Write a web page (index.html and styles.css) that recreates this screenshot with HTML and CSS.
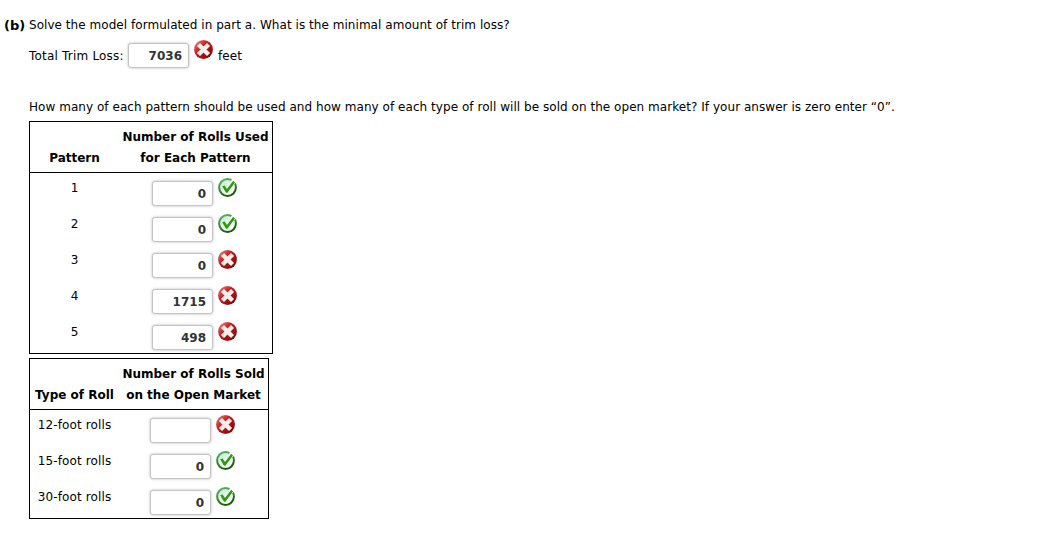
FILE: index.html
```html
<!DOCTYPE html>
<html>
<head>
<meta charset="utf-8">
<title>Trim Loss</title>
<link rel="stylesheet" href="styles.css">
</head>
<body>
	<svg class="defs" width="0" height="0">
		<defs>
			<linearGradient id="redFill" x1="0" y1="0" x2="1" y2="1">
				<stop offset="0" stop-color="#f08a8a"/>
				<stop offset="0.4" stop-color="#c81c24"/>
				<stop offset="1" stop-color="#700000"/>
			</linearGradient>
			<linearGradient id="greenRing" x1="0" y1="0" x2="0.5" y2="1">
				<stop offset="0" stop-color="#5cba68"/>
				<stop offset="1" stop-color="#145c08"/>
			</linearGradient>
			<linearGradient id="greenFill" x1="0" y1="0" x2="1" y2="1">
				<stop offset="0" stop-color="#b4e6c0"/>
				<stop offset="0.7" stop-color="#ffffff"/>
			</linearGradient>
			<symbol id="wrong" viewBox="0 0 19 19">
				<circle cx="9.5" cy="9.5" r="9.4" fill="url(#redFill)"/>
				<path d="M6 6L13 13M13 6L6 13" stroke="#f3efe9" stroke-width="4.4" stroke-linecap="square"/>
			</symbol>
			<symbol id="right" viewBox="0 0 19 19">
				<circle cx="9.5" cy="9.5" r="8.4" fill="url(#greenFill)" stroke="url(#greenRing)" stroke-width="2"/>
				<path d="M12.6 3.6L14.6 0L18.6 4.2L15.4 7Z" fill="#fff"/>
				<path d="M4.2 8.2L6.6 7.4L9 11L15.2 2.8L17 4.6L9.4 14.8L8 14.8Z" fill="#329a0a"/>
			</symbol>
		</defs>
	</svg>

	<div class="question"><b class="part">(b)</b><span>Solve the model formulated in part a. What is the minimal amount of trim loss?</span></div>
	<div class="loss">
		<span class="losslabel">Total Trim Loss:</span>
		<div class="answer"><input type="text" value="7036"><svg class="mark"><use href="#wrong"/></svg></div>
		<span class="unit">feet</span>
	</div>

	<p class="howmany">How many of each pattern should be used and how many of each type of roll will be sold on the open market? If your answer is zero enter “0”.</p>

	<table class="rolls used">
		<tr>
			<th class="name"><span>Pattern</span></th>
			<th><span>Number of Rolls Used</span><br><span>for Each Pattern</span></th>
		</tr>
		<tr>
			<td class="name">1</td>
			<td><div class="answer"><input type="text" value="0"><svg class="mark"><use href="#right"/></svg></div></td>
		</tr>
		<tr>
			<td class="name">2</td>
			<td><div class="answer"><input type="text" value="0"><svg class="mark"><use href="#right"/></svg></div></td>
		</tr>
		<tr>
			<td class="name">3</td>
			<td><div class="answer"><input type="text" value="0"><svg class="mark"><use href="#wrong"/></svg></div></td>
		</tr>
		<tr>
			<td class="name">4</td>
			<td><div class="answer"><input type="text" value="1715"><svg class="mark"><use href="#wrong"/></svg></div></td>
		</tr>
		<tr>
			<td class="name">5</td>
			<td><div class="answer"><input type="text" value="498"><svg class="mark"><use href="#wrong"/></svg></div></td>
		</tr>
	</table>

	<table class="rolls sold">
		<tr>
			<th class="name"><span>Type of Roll</span></th>
			<th><span>Number of Rolls Sold</span><br><span>on the Open Market</span></th>
		</tr>
		<tr>
			<td class="name">12-foot rolls</td>
			<td><div class="answer"><input type="text" value=""><svg class="mark"><use href="#wrong"/></svg></div></td>
		</tr>
		<tr>
			<td class="name">15-foot rolls</td>
			<td><div class="answer"><input type="text" value="0"><svg class="mark"><use href="#right"/></svg></div></td>
		</tr>
		<tr>
			<td class="name">30-foot rolls</td>
			<td><div class="answer"><input type="text" value="0"><svg class="mark"><use href="#right"/></svg></div></td>
		</tr>
	</table>
</body>
</html>
```

FILE: styles.css
```css
body {
	margin: 0;
	padding: 15px 0 0 29px;
	background: #fff;
	color: #000;
	font-family: Verdana, "DejaVu Sans", sans-serif;
	font-size: 12px;
	line-height: 21px;
	letter-spacing: 0.045px;
}
.defs {
	display: block;
}
.question {
	display: flex;
	margin-left: -25px;
	white-space: nowrap;
}
.part {
	width: 25px;
	font-size: 13px;
}
.loss {
	display: flex;
	height: 36px;
}
.losslabel {
	width: 99px;
	padding-top: 10px;
	white-space: nowrap;
	letter-spacing: 0.2px;
}
.unit {
	padding: 10px 0 0 5px;
}
.answer {
	display: flex;
	align-items: flex-start;
	padding-top: 5px;
}
.loss .answer {
	padding-top: 4px;
}
.answer input {
	box-sizing: border-box;
	width: 61px;
	height: 25px;
	margin: 3px 5px 0 0;
	padding: 1px 6px 0 5px;
	border: 1px solid #c4c4c4;
	border-radius: 3px;
	box-shadow: 0 0 3px #bbb;
	color: #333;
	background: #fff;
	font: bold 12px Verdana, "DejaVu Sans", sans-serif;
	text-align: right;
}
.mark {
	width: 19px;
	height: 19px;
}
.howmany {
	margin: 25px 0 3px;
	white-space: nowrap;
}
.rolls {
	margin: 0 0 4px;
	border: 1px solid #000;
	border-spacing: 0;
	table-layout: fixed;
}
.rolls th {
	height: 42px;
	padding: 5px 0 3px;
	border-bottom: 1px solid #000;
	vertical-align: bottom;
	white-space: nowrap;
	letter-spacing: 0;
}
.rolls td {
	height: 36px;
	padding: 0;
	vertical-align: top;
}
.rolls td.name {
	height: 31px;
	padding-top: 5px;
	text-align: center;
	white-space: nowrap;
}
.rolls .name {
	width: 89px;
}
.sold td.name {
	letter-spacing: 0.12px;
}
.rolls td .answer {
	padding-left: 33px;
}
.used {
	width: 244px;
}
.sold {
	width: 240px;
}
.sold td .answer {
	padding-left: 31px;
}
```
